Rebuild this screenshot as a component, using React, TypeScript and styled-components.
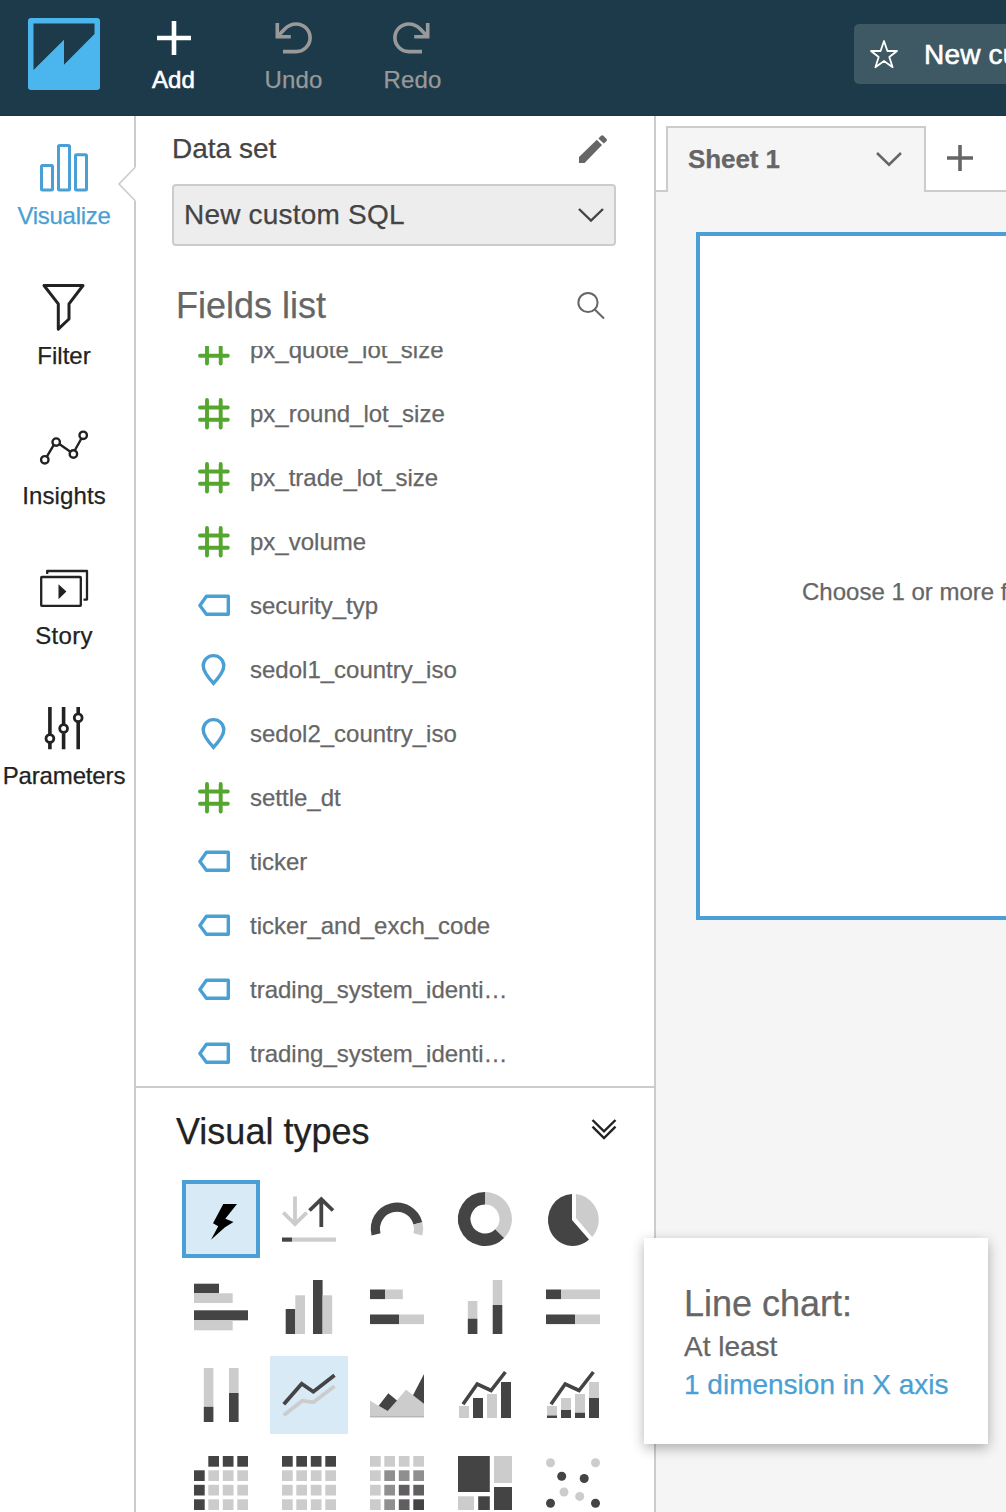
import React from 'react';
import styled, { createGlobalStyle } from 'styled-components';

const DARK = '#444444';
const LIGHT = '#cccccc';
const BLUE = '#4a9fd4';
const INK = '#222222';

const GlobalStyle = createGlobalStyle`
  * { box-sizing: border-box; }
  body {
    margin: 0;
    overflow: hidden;
    font-family: "Liberation Sans", Arial, sans-serif;
    background: #fff;
    -webkit-text-stroke: 0.25px currentColor;
  }
  svg { display: block; flex: none; overflow: visible; }
`;

const Page = styled.div`
  display: flex;
  flex-direction: column;
  width: 100vw;
  height: 1512px;
  overflow: hidden;
  position: relative;
`;

/* ---------- header ---------- */

const Header = styled.header`
  display: flex;
  flex: none;
  height: 116px;
  padding: 18px 0 0 28px;
  background: #1d3a4b;
  border-bottom: 1px solid #18384a;
`;

const Tools = styled.div`
  display: flex;
  flex: 1;
  margin-left: 14px;
`;

const Tool = styled.div<{ $muted?: boolean }>`
  display: flex;
  flex-direction: column;
  align-items: center;
  width: 119px;
  padding-left: ${(p) => (p.$muted ? '2px' : '0')};
  color: ${(p) => (p.$muted ? '#999999' : '#ffffff')};
  font-size: 24px;
  line-height: 28px;
  letter-spacing: 0.1px;
  -webkit-text-stroke: ${(p) => (p.$muted ? '0.25px #999' : '0.6px #fff')};
  svg { margin: 0 0 8px ${(p) => (p.$muted ? '-1px' : '0')}; }
`;

const TitleBox = styled.div`
  display: flex;
  align-items: center;
  width: 152px;
  height: 60px;
  margin-top: 6px;
  padding-left: 16px;
  gap: 26px;
  border-radius: 5px 0 0 5px;
  background: #3e5864;
  color: #fff;
  font-size: 28px;
  line-height: 34px;
  letter-spacing: 0.2px;
  white-space: nowrap;
  overflow: hidden;
  -webkit-text-stroke: 0.6px #fff;
`;

const TitleText = styled.span`
  padding-top: 2px;
`;

/* ---------- body layout ---------- */

const Body = styled.div`
  display: flex;
  flex: 1;
  min-height: 0;
`;

const Sidebar = styled.nav`
  position: relative;
  flex: none;
  width: 136px;
  padding-top: 28px;
  border-right: 2px solid ${LIGHT};
`;

const NavItem = styled.div<{ $active?: boolean; $spacing?: number }>`
  display: flex;
  flex-direction: column;
  align-items: center;
  gap: 10px;
  width: 128px;
  height: 140px;
  color: ${(p) => (p.$active ? BLUE : INK)};
  font-size: 24px;
  line-height: 28px;
  letter-spacing: ${(p) => p.$spacing ?? 0}px;
`;

const Notch = styled.svg`
  position: absolute;
  top: 50px;
  left: 117px;
`;

const Panel = styled.aside`
  display: flex;
  flex-direction: column;
  flex: none;
  width: 520px;
  border-right: 2px solid ${LIGHT};
`;

const PanelHead = styled.div`
  display: flex;
  align-items: center;
  justify-content: space-between;
  height: 66px;
  padding: 0 47px 0 36px;
  color: ${DARK};
  font-size: 28px;
  svg { margin-bottom: 1px; }
`;

const Select = styled.div`
  display: flex;
  align-items: center;
  justify-content: space-between;
  width: 444px;
  height: 62px;
  margin: 2px 0 0 36px;
  padding: 0 10px 0 10px;
  border: 2px solid ${LIGHT};
  border-radius: 4px;
  background: #ededed;
  color: ${DARK};
  font-size: 28px;
  letter-spacing: 0.2px;
`;

const FieldsHead = styled.div`
  display: flex;
  align-items: center;
  justify-content: space-between;
  height: 100px;
  padding: 20px 49px 0 40px;
  color: #666;
  font-size: 36px;
`;

const FieldList = styled.div`
  height: 740px;
  overflow: hidden;
`;

const FieldRows = styled.div`
  margin-top: -28px;
`;

const FieldRow = styled.div`
  display: flex;
  align-items: center;
  gap: 20px;
  height: 64px;
  padding-left: 62px;
  color: #666;
  font-size: 24px;
`;

const VisualTypes = styled.section`
  flex: 1;
  border-top: 2px solid ${LIGHT};
  overflow: hidden;
`;

const VisualHead = styled.div`
  display: flex;
  align-items: center;
  justify-content: space-between;
  height: 92px;
  padding: 0 38px 4px 40px;
  color: ${INK};
  font-size: 36px;
  svg { margin-bottom: 6px; }
`;

const TypeGrid = styled.div`
  display: grid;
  grid-template-columns: repeat(5, 78px);
  grid-auto-rows: 78px;
  gap: 10px;
  padding-left: 46px;
`;

const TypeCell = styled.div<{ $state?: 'selected' | 'hover' }>`
  display: flex;
  align-items: center;
  justify-content: center;
  background: ${(p) => (p.$state ? '#d7eaf5' : 'transparent')};
  border: ${(p) => (p.$state === 'selected' ? `4px solid ${BLUE}` : '0')};
`;

/* ---------- sheet area ---------- */

const Main = styled.main`
  display: flex;
  flex-direction: column;
  flex: 1;
  min-width: 0;
  background: #f5f5f5;
`;

const TabBar = styled.div`
  display: flex;
  align-items: flex-end;
  height: 76px;
  background: #fff;
`;

const TabGap = styled.div`
  width: 10px;
  height: 2px;
  background: ${LIGHT};
`;

const Tab = styled.div`
  display: flex;
  align-items: center;
  justify-content: space-between;
  width: 260px;
  height: 66px;
  padding: 0 22px 2px 20px;
  border: 2px solid ${LIGHT};
  border-bottom: 0;
  background: #f5f5f5;
  color: #666;
  font-size: 26px;
  font-weight: 700;
  letter-spacing: -0.1px;
`;

const TabRest = styled.div`
  flex: 1;
  height: 66px;
  padding: 19px 0 0 21px;
  border-bottom: 2px solid ${LIGHT};
`;

const Visual = styled.div`
  display: flex;
  align-items: center;
  height: 688px;
  margin: 40px 0 0 40px;
  padding: 32px 0 0 102px;
  border: 4px solid ${BLUE};
  border-right: 0;
  background: #fff;
  color: #666;
  font-size: 24px;
  white-space: nowrap;
  overflow: hidden;
`;

const Tooltip = styled.div`
  position: absolute;
  left: 644px;
  top: 1238px;
  width: 344px;
  height: 206px;
  padding: 43px 40px 0;
  background: #fff;
  box-shadow: 0 4px 12px rgba(0, 0, 0, 0.3);
  color: #666;
  font-size: 28px;
  line-height: 38px;
  white-space: nowrap;
`;

const TooltipTitle = styled.div`
  height: 47px;
  font-size: 36px;
  line-height: 46px;
`;

const TooltipLink = styled.div`
  color: ${BLUE};
`;

/* ---------- icons ---------- */

const Logo = () => (
  <svg width="72" height="72" viewBox="0 0 72 72">
    <rect width="72" height="72" rx="3" fill="#4bb5ee" />
    <path d="M5.5 5.5H66.5V16L36 46.7V21.7L5.5 52Z" fill="#1d3a4b" />
  </svg>
);

const AddIcon = () => (
  <svg width="40" height="40" viewBox="0 0 40 40" stroke="currentColor" strokeWidth="4.6">
    <path d="M20 3V37M3 20H37" />
  </svg>
);

const TurnIcon = ({ flip }: { flip?: boolean }) => (
  <svg width="40" height="40" viewBox="0 0 40 40" fill="none" stroke="currentColor" strokeWidth="3.6">
    <g transform={flip ? 'translate(40 0) scale(-1 1)' : undefined}>
      <path d="M4.3 5V18.8H17.8" />
      <path d="M4.3 18.8L11.5 11.2Q16.5 6 23.3 6A13.8 13.8 0 0 1 23.3 33.6H10" />
    </g>
  </svg>
);

const StarIcon = () => (
  <svg width="28" height="28" viewBox="0 0 28 28" fill="none" stroke="#fff" strokeWidth="1.8" strokeLinejoin="round">
    <path d="M14 1L17.4 11H27L19.3 17L22.6 27.2L14 21L5.4 27.2L8.7 17L1 11H10.6Z" />
  </svg>
);

const BarsIcon = () => (
  <svg width="48" height="48" viewBox="0 0 48 48" fill="none" stroke="currentColor" strokeWidth="3">
    <rect x="1.5" y="21.5" width="11" height="24.5" rx="1" />
    <rect x="18.5" y="1.5" width="11" height="44.5" rx="1" />
    <rect x="35.5" y="10.8" width="11" height="35.2" rx="1" />
  </svg>
);

const FunnelIcon = () => (
  <svg width="48" height="48" viewBox="0 0 48 48" fill="none" stroke="currentColor" strokeWidth="3" strokeLinejoin="round">
    <path d="M4 1.5H43L29 19.8V35L18.3 45.2V19.8Z" />
  </svg>
);

const InsightsIcon = () => (
  <svg width="48" height="48" viewBox="0 0 48 48" fill="none" stroke="currentColor" strokeWidth="2.4">
    <path d="M7 32.3L13.8 20.8M19.3 20.1L30 27.5M35 26L41.4 14.5" />
    <circle cx="4.8" cy="35.8" r="3.7" />
    <circle cx="16.2" cy="18.1" r="3.7" />
    <circle cx="33.4" cy="30" r="3.7" />
    <circle cx="43.2" cy="11.3" r="3.7" />
  </svg>
);

const StoryIcon = () => (
  <svg width="48" height="48" viewBox="0 0 48 48" fill="none" stroke="currentColor" strokeWidth="2.3" strokeLinejoin="round">
    <rect x="1.2" y="13" width="39.6" height="28.9" rx="0.6" />
    <path d="M7.2 10V7H47V35.6H43.5" />
    <path d="M18.5 20.2V35.2L26.4 27.6Z" fill="currentColor" stroke="none" />
  </svg>
);

const SlidersIcon = () => (
  <svg width="48" height="48" viewBox="0 0 48 48" fill="none" stroke="currentColor" strokeWidth="3.6">
    <path d="M9.9 3V30M9.9 39V45.3M23.6 3V20.5M23.6 29.5V45.3M38.2 3V9.5M38.2 18V45.3" />
    <g strokeWidth="2.8">
      <circle cx="9.9" cy="34.6" r="3.9" />
      <circle cx="23.6" cy="24.6" r="3.9" />
      <circle cx="38.2" cy="13.8" r="3.9" />
    </g>
  </svg>
);

const PencilIcon = () => (
  <svg width="28" height="28" viewBox="0 0 28 28" fill="#666">
    <path d="M0 22L17.8 4.8L23 10L5.6 28H0Z" />
    <path d="M19.4 3.4L22 0.8Q23.2 -0.3 24.4 0.8L27.6 4Q28.4 5 27.6 6L24.8 8.6Z" />
  </svg>
);

const Chevron = ({ width = 2.6 }: { width?: number }) => (
  <svg width="26" height="14" viewBox="0 0 26 14" fill="none" stroke="currentColor" strokeWidth={width}>
    <path d="M1 1L13 12.6L25 1" />
  </svg>
);

const SearchIcon = () => (
  <svg width="28" height="28" viewBox="0 0 28 28" fill="none" stroke="#666" strokeWidth="2">
    <circle cx="11" cy="10.5" r="9.6" />
    <path d="M17.5 17.2L27 26.5" />
  </svg>
);

const DoubleChevron = () => (
  <svg width="24" height="20" viewBox="0 0 24 20" fill="none" stroke={INK} strokeWidth="2.4">
    <path d="M0.5 1L12 12.3L23.5 1M0.5 7.7L12 19L23.5 7.7" />
  </svg>
);

const PlusIcon = () => (
  <svg width="26" height="26" viewBox="0 0 26 26" stroke="#666" strokeWidth="3.6">
    <path d="M13 0V26M0 13H26" />
  </svg>
);

type FieldKind = 'number' | 'text' | 'geo';

const FieldIcon = ({ kind }: { kind: FieldKind }) => (
  <svg width="32" height="32" viewBox="0 0 32 32" fill="none" stroke={kind === 'number' ? '#55a630' : BLUE}>
    {kind === 'number' && (
      <path d="M9 2V29.6M22.7 2V29.6M2 9.5H29.8M2 21.7H29.8" strokeWidth="3.9" strokeLinecap="round" />
    )}
    {kind === 'text' && (
      <path d="M1.9 15.4L8.4 6.3H30.3V24.3H8.4Z" strokeWidth="3.4" strokeLinejoin="round" />
    )}
    {kind === 'geo' && (
      <path d="M15.5 29.4C11 24.5 5.2 18 5.2 11.8A10.3 10.2 0 0 1 25.8 11.8C25.8 18 20 24.5 15.5 29.4Z" strokeWidth="3.4" />
    )}
  </svg>
);

/* Rectangles are [x, y, width, height, fill]. */
type Block = [number, number, number, number, string];

const Blocks = ({ items }: { items: Block[] }) => (
  <>
    {items.map(([x, y, w, h, fill], i) => (
      <rect key={i} x={x} y={y} width={w} height={h} fill={fill} />
    ))}
  </>
);

const Cells = ({ colors }: { colors: string[][] }) => {
  const stops = [0, 14.3, 28.8, 43.3];
  const items: Block[] = [];
  colors.forEach((row, r) => row.forEach((c, i) => items.push([stops[i], stops[r], 10.7, 10.7, c])));
  return <Blocks items={items} />;
};

const D = DARK;
const L = LIGHT;
const M = '#8f8f8f';
const N = '#605e60';
const O = 'none';

const TYPES: { name: string; state?: 'selected' | 'hover'; art: React.ReactNode }[] = [
  {
    name: 'auto',
    state: 'selected',
    art: <path d="M29.3 12H43L31.3 26.8L39.5 30L31 35.2L17 47.7L24.2 34.2L19 31.3Z" fill="#000" />,
  },
  {
    name: 'kpi',
    art: (
      <>
        <g fill="none" strokeWidth="3.8">
          <path d="M13 4.5V31M1.3 20.7L13 32L24.7 20.7" stroke={L} />
          <path d="M39.3 35V7M27.5 18.5L39.3 7.2L51 18.5" stroke={D} />
        </g>
        <Blocks items={[[0, 45.5, 10, 4.2, D], [10, 45.5, 44, 4.2, L]]} />
      </>
    ),
  },
  {
    name: 'gauge',
    art: (
      <g fill="none" strokeWidth="9.2">
        <path d="M6.1 42.3A21.6 21.6 0 0 1 47.9 31.3" stroke={D} />
        <path d="M47.9 31.3A21.6 21.6 0 0 1 47.9 42.3" stroke={L} />
      </g>
    ),
  },
  {
    name: 'donut',
    art: (
      <g fill="none" strokeWidth="12.6">
        <path d="M27 6.3A20.7 20.7 0 0 1 41.6 41.6" stroke={L} />
        <path d="M41.6 41.6A20.7 20.7 0 1 1 27 6.3" stroke={D} />
      </g>
    ),
  },
  {
    name: 'pie',
    art: (
      <>
        <path d="M26 2V28L43 47.6A24.8 26 0 1 1 26 2Z" fill={D} />
        <path d="M30 2V26L46.2 45A26 26 0 0 0 30 2Z" fill={L} />
      </>
    ),
  },
  {
    name: 'hbar',
    art: <Blocks items={[[0, 3.7, 25, 9.6, D], [0, 13.3, 38.7, 9.7, L], [0, 30.3, 54, 10, D], [0, 40.3, 38.7, 10, L]]} />,
  },
  {
    name: 'vbar',
    art: <Blocks items={[[3.7, 29, 9.6, 25, D], [13.3, 15.3, 9.7, 38.7, L], [31, 0, 9.6, 54, D], [40.6, 15.3, 9.6, 38.7, L]]} />,
  },
  {
    name: 'hstack',
    art: <Blocks items={[[0, 9.5, 15, 9.6, D], [15, 9.5, 17.8, 9.6, L], [0, 34.5, 29, 9.6, D], [29, 34.5, 25, 9.6, L]]} />,
  },
  {
    name: 'vstack',
    art: <Blocks items={[[9.8, 21, 9.6, 17.7, L], [9.8, 38.7, 9.6, 15.3, D], [34.7, 0, 9.6, 25, L], [34.7, 25, 9.6, 29, D]]} />,
  },
  {
    name: 'hstack100',
    art: <Blocks items={[[0, 9.5, 15, 9.6, D], [15, 9.5, 39, 9.6, L], [0, 34.5, 29, 9.6, D], [29, 34.5, 25, 9.6, L]]} />,
  },
  {
    name: 'vstack100',
    art: <Blocks items={[[9.8, 0, 9.6, 38.8, L], [9.8, 38.8, 9.6, 15.2, D], [35, 0, 9.6, 25, L], [35, 25, 9.6, 29, D]]} />,
  },
  {
    name: 'line',
    state: 'hover',
    art: (
      <g fill="none" strokeWidth="3.8">
        <path d="M1.8 47.3L20.3 32.7L31.3 34.3L52.5 18.3" stroke={L} />
        <path d="M1.8 36.3L19.7 15.7L31.3 23.7L52.5 7.2" stroke={D} />
      </g>
    ),
  },
  {
    name: 'area',
    art: (
      <>
        <path d="M0 32.7L17.7 43L36 21.7L54 35.3V49H0Z" fill={L} />
        <path d="M8.7 37.7L18.3 25.3L27 32.4L17.7 43Z" fill={D} />
        <path d="M54 6V35.8L43 27.2Z" fill={D} />
        <rect y="48.4" width="54" height="1" fill="#aaa" />
      </>
    ),
  },
  {
    name: 'combo',
    art: (
      <>
        <Blocks items={[[1, 38, 10, 12, L], [15, 30, 10, 20, D], [29, 26, 10, 24, L], [43, 14, 10, 36, D]]} />
        <path d="M5 36.3L19.2 16L33 22.5L47.4 4" fill="none" stroke={D} strokeWidth="3.6" />
      </>
    ),
  },
  {
    name: 'combostack',
    art: (
      <>
        <Blocks
          items={[
            [1, 38, 10, 9.5, L], [1, 47.5, 10, 2.5, D],
            [15, 30, 10, 12, L], [15, 42, 10, 8, D],
            [29, 26, 10, 18.7, L], [29, 44.7, 10, 5.3, D],
            [43, 14, 10, 16, L], [43, 30, 10, 20, D],
          ]}
        />
        <path d="M5 36.3L19.2 16L33 22.5L47.4 4" fill="none" stroke={D} strokeWidth="3.6" />
      </>
    ),
  },
  { name: 'pivot', art: <Cells colors={[[O, D, D, D], [D, L, L, L], [D, L, L, L], [D, L, L, L]]} /> },
  { name: 'table', art: <Cells colors={[[D, D, D, D], [L, L, L, L], [L, L, L, L], [L, L, L, L]]} /> },
  { name: 'heat', art: <Cells colors={[[L, L, L, L], [L, M, M, M], [L, M, N, N], [L, M, N, D]]} /> },
  {
    name: 'tree',
    art: <Blocks items={[[0, 0, 31.8, 36, D], [36, 0, 18, 27, L], [36, 31, 18, 23, D], [0, 40.3, 16, 13.7, L], [20.2, 40.3, 11.6, 13.7, D]]} />,
  },
  {
    name: 'scatter',
    art: (
      <>
        {([[4.5, 6.7, L], [49.5, 6.7, L], [15.7, 20.3, D], [38.2, 22.5, D], [18, 36, L], [33.7, 40.4, L], [4.5, 47.3, D], [49.5, 47.3, D]] as [number, number, string][]).map(
          ([x, y, c], i) => (
            <circle key={i} cx={x} cy={y} r="4.5" fill={c} />
          ),
        )}
      </>
    ),
  },
];

const FIELDS: [FieldKind, string][] = [
  ['number', 'px_quote_lot_size'],
  ['number', 'px_round_lot_size'],
  ['number', 'px_trade_lot_size'],
  ['number', 'px_volume'],
  ['text', 'security_typ'],
  ['geo', 'sedol1_country_iso'],
  ['geo', 'sedol2_country_iso'],
  ['number', 'settle_dt'],
  ['text', 'ticker'],
  ['text', 'ticker_and_exch_code'],
  ['text', 'trading_system_identi…'],
  ['text', 'trading_system_identi…'],
];

export default function App() {
  return (
    <>
      <GlobalStyle />
      <Page>
        <Header>
          <Logo />
          <Tools>
            <Tool><AddIcon />Add</Tool>
            <Tool $muted><TurnIcon />Undo</Tool>
            <Tool $muted><TurnIcon flip />Redo</Tool>
          </Tools>
          <TitleBox><StarIcon /><TitleText>New cu</TitleText></TitleBox>
        </Header>
        <Body>
          <Sidebar>
            <NavItem $active $spacing={-0.3}><BarsIcon />Visualize</NavItem>
            <NavItem><FunnelIcon />Filter</NavItem>
            <NavItem $spacing={0.1}><InsightsIcon />Insights</NavItem>
            <NavItem $spacing={0.3}><StoryIcon />Story</NavItem>
            <NavItem $spacing={-0.15}><SlidersIcon />Parameters</NavItem>
            <Notch width="20" height="36" viewBox="0 0 20 36">
              <path d="M20 1.5H18L2 18L18 34.5H20Z" fill="#fff" />
              <path d="M18 1.5L2 18L18 34.5" fill="none" stroke={LIGHT} strokeWidth="1.6" />
            </Notch>
          </Sidebar>
          <Panel>
            <PanelHead>Data set<PencilIcon /></PanelHead>
            <Select>New custom SQL<Chevron width={2.4} /></Select>
            <FieldsHead>Fields list<SearchIcon /></FieldsHead>
            <FieldList>
              <FieldRows>
                {FIELDS.map(([kind, name], i) => (
                  <FieldRow key={i}><FieldIcon kind={kind} />{name}</FieldRow>
                ))}
              </FieldRows>
            </FieldList>
            <VisualTypes>
              <VisualHead>Visual types<DoubleChevron /></VisualHead>
              <TypeGrid>
                {TYPES.map((t) => (
                  <TypeCell key={t.name} $state={t.state}>
                    <svg width="54" height="54" viewBox="0 0 54 54">{t.art}</svg>
                  </TypeCell>
                ))}
              </TypeGrid>
            </VisualTypes>
          </Panel>
          <Main>
            <TabBar>
              <TabGap />
              <Tab>Sheet 1<Chevron /></Tab>
              <TabRest><PlusIcon /></TabRest>
            </TabBar>
            <Visual>Choose 1 or more f</Visual>
          </Main>
        </Body>
        <Tooltip>
          <TooltipTitle>Line chart:</TooltipTitle>
          <div>At least</div>
          <TooltipLink>1 dimension in X axis</TooltipLink>
        </Tooltip>
      </Page>
    </>
  );
}
